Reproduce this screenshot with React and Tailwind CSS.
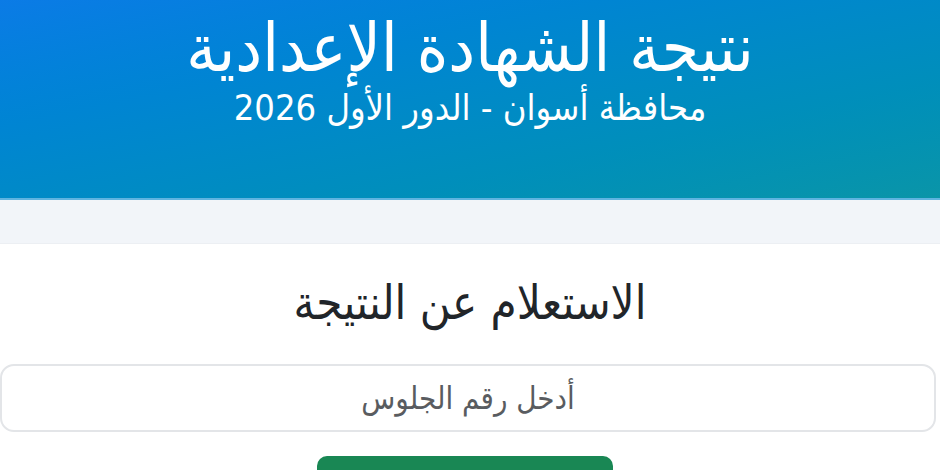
export default function App() {
  return (
    <div dir="rtl" className="w-[940px] h-[470px] overflow-hidden bg-white font-stretch-condensed" style={{ fontFamily: '"DejaVu Sans", sans-serif' }}>
      <header className="h-[200px] bg-linear-to-br from-[#0b7be6] to-[#0a95a8] text-white text-center pt-[8px] border-b-2 border-[#5fb4e0]">
        <h1 className="text-[67px] leading-[80px]">نتيجة الشهادة الإعدادية</h1>
        <p className="text-[36px] leading-[44px] -mt-[2px]">محافظة أسوان - الدور الأول 2026</p>
      </header>
      <div className="h-[43px] bg-[#f2f5f9]"></div>
      <main className="bg-white border-t border-[#eceff3] flex flex-col items-start">
        <h2 className="w-full text-center text-[47px] leading-[56px] text-[#212529] mt-[31px]">الاستعلام عن النتيجة</h2>
        <div className="w-[936px] h-[68px] mt-[33px] mr-[4px] border-2 border-[#e3e5e8] rounded-[14px] flex items-center justify-center text-[31px] text-[#595c60]">
          أدخل رقم الجلوس
        </div>
        <div className="self-center w-[296px] h-[50px] mt-[24px] rounded-[10px] bg-[#198754] mr-[10px]"></div>
      </main>
    </div>
  );
}
